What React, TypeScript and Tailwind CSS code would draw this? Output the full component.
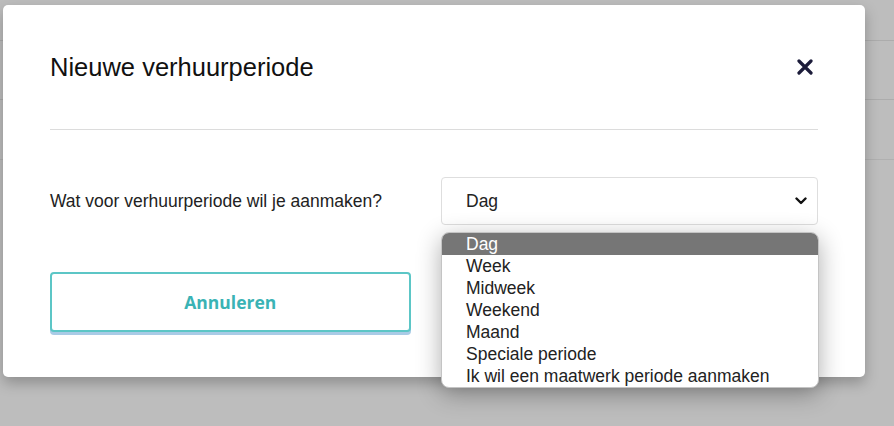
const options = ["Dag", "Week", "Midweek", "Weekend", "Maand", "Speciale periode", "Ik wil een maatwerk periode aanmaken"];

const App = () => {
	return (
		<div className="relative h-[426px] w-[894px] overflow-hidden bg-[#bdbdbd] font-['Liberation_Sans',Arial,sans-serif]">
			{/* page behind the overlay */}
			<div className="flex flex-col">
				<div className="h-[41px] border-b border-[#acacac]"></div>
				<div className="h-[59px] border-b border-[#acacac]"></div>
				<div className="h-[60px] border-b border-[#b0b0b0]"></div>
			</div>

			{/* modal */}
			<div className="absolute left-[3px] top-[5px] flex h-[372px] w-[862px] flex-col rounded-[5px] bg-white px-[47px] pt-[48px] shadow-[0_6px_14px_rgba(0,0,0,0.25)]">
				<div className="flex h-[28px] items-center justify-between">
					<h2 className="text-[25.5px] leading-[28px] text-[#111]">Nieuwe verhuurperiode</h2>
					<svg width="16" height="16" viewBox="0 0 16 16" className="mr-[5px]">
						<path d="M2 2 L14 14 M14 2 L2 14" stroke="#1c1c3a" strokeWidth="3.2" strokeLinecap="round" />
					</svg>
				</div>
				<div className="mt-[48px] h-px bg-[#dcdcdc]"></div>

				<div className="mt-[47px] flex items-center">
					<div className="w-[391px] text-[17.5px] text-[#222]">Wat voor verhuurperiode wil je aanmaken?</div>
					<div className="flex h-[48px] flex-1 items-center justify-between rounded-[4px] border border-[#dedede] pl-[24px] pr-[10px]">
						<span className="text-[17.5px] text-[#222]">Dag</span>
						<svg width="12" height="8" viewBox="0 0 12 8">
							<path d="M1.5 1.5 L6 6 L10.5 1.5" stroke="#111" strokeWidth="2.4" fill="none" strokeLinecap="round" strokeLinejoin="round" />
						</svg>
					</div>
				</div>

				<div className="mt-[47px] flex gap-[47px]">
					<button className="flex h-[60px] flex-1 items-center justify-center rounded-[4px] border-2 border-[#5cc6c6] bg-white font-['Open_Sans',sans-serif] text-[17.5px] font-bold text-[#3ab3b5] shadow-[0_3px_0_#a9cbe6]">
						Annuleren
					</button>
					<button className="flex h-[60px] flex-1 items-center justify-center rounded-[4px] border-2 border-[#5cc6c6] bg-white font-['Open_Sans',sans-serif] text-[17.5px] font-bold text-[#3ab3b5] shadow-[0_3px_0_#a9cbe6]">
						Aanmaken
					</button>
				</div>
			</div>

			{/* open select list */}
			<ul className="absolute left-[441px] top-[232px] w-[378px] overflow-hidden rounded-[8px] border border-[#c4c4c4] bg-white shadow-[0_6px_24px_rgba(0,0,0,0.32)]">
				{options.map((o, i) => (
					<li
						key={o}
						className={
							i === 0
								? "h-[22px] bg-[#767676] pl-[24px] text-[17.5px] leading-[22px] text-white"
								: "h-[22px] pl-[24px] text-[17.5px] leading-[22px] text-[#222]"
						}
					>
						{o}
					</li>
				))}
			</ul>
		</div>
	);
};
export default App;
